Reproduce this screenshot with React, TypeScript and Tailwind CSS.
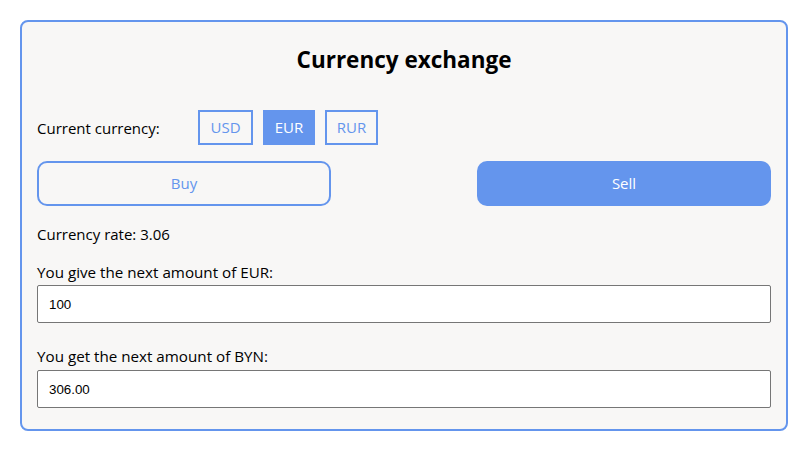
import React from "react";

export default function App() {
  const font = { fontFamily: '"Open Sans", "Noto Sans", sans-serif' };
  return (
    <div className="w-[805px] h-[456px] bg-white pt-[20px] pl-[20px]" style={font}>
      <div className="w-[768px] h-[411px] border-2 border-[#6495ed] rounded-[8px] bg-[#f8f7f6] px-[15px] pt-[22px] flex flex-col text-black">
        <h1 className="h-[32px] leading-[32px] text-[22.5px] font-bold text-center">Currency exchange</h1>
        <div className="mt-[34px] h-[35px] flex items-center">
          <span className="w-[161px] text-[15px] leading-[20px]">Current currency:</span>
          <div className="flex gap-[10px]">
            <button className="w-[55px] h-[35px] border-2 border-[#6495ed] text-[#6495ed] text-[15px] bg-transparent">USD</button>
            <button className="w-[52px] h-[35px] border-2 border-[#6495ed] bg-[#6495ed] text-white text-[15px]">EUR</button>
            <button className="w-[53px] h-[35px] border-2 border-[#6495ed] text-[#6495ed] text-[15px] bg-transparent">RUR</button>
          </div>
        </div>
        <div className="mt-[16px] h-[45px] flex justify-between">
          <button className="w-[294px] h-[45px] border-2 border-[#6495ed] rounded-[10px] text-[#6495ed] text-[15px] bg-transparent">Buy</button>
          <button className="w-[294px] h-[45px] rounded-[10px] bg-[#6495ed] text-white text-[15px]">Sell</button>
        </div>
        <div className="mt-[18px] h-[20px] leading-[20px] text-[15px]">Currency rate: 3.06</div>
        <div className="mt-[18px] h-[20px] leading-[20px] text-[15.2px]">You give the next amount of EUR:</div>
        <input
          readOnly
          value="100"
          className="mt-[3px] h-[38px] w-full border border-[#767676] rounded-[2px] bg-white px-[11px] text-[13.33px] text-black outline-none"
          style={{ fontFamily: '"Liberation Sans", Arial, sans-serif' }}
        />
        <div className="mt-[23px] h-[20px] leading-[20px] text-[15.2px]">You get the next amount of BYN:</div>
        <input
          readOnly
          value="306.00"
          className="mt-[4px] h-[38px] w-full border border-[#767676] rounded-[2px] bg-white px-[11px] text-[13.33px] text-black outline-none"
          style={{ fontFamily: '"Liberation Sans", Arial, sans-serif' }}
        />
      </div>
    </div>
  );
}
